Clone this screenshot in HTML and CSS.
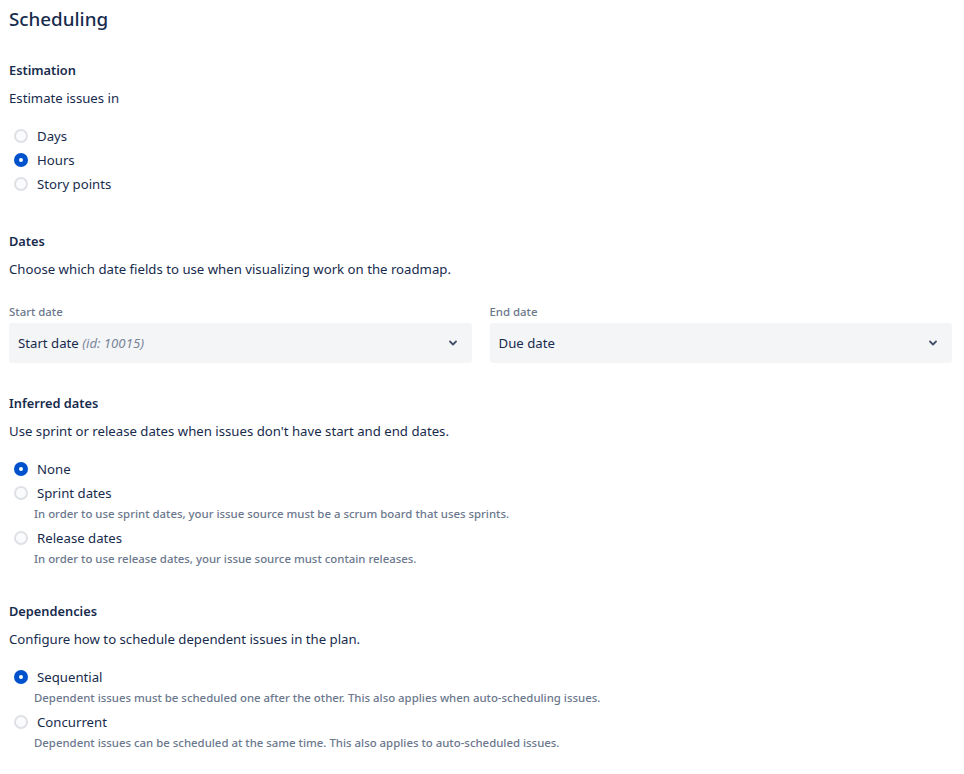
FILE: index.html
```html
<!DOCTYPE html>
<html lang="en">
<head>
  <meta charset="UTF-8">
  <title>Scheduling</title>
  <link rel="stylesheet" href="styles.css">
</head>
<body>
  <h1 class="page-title">Scheduling</h1>

  <section class="group first">
    <h2>Estimation</h2>
    <p class="desc">Estimate issues in</p>
    <div class="radios">
      <label class="radio"><span class="dot"></span>Days</label>
      <label class="radio"><span class="dot checked"></span>Hours</label>
      <label class="radio"><span class="dot"></span>Story points</label>
    </div>
  </section>

  <section class="group dates">
    <h2>Dates</h2>
    <p class="desc">Choose which date fields to use when visualizing work on the roadmap.</p>
    <div class="fields">
      <div class="field">
        <div class="field-label">Start date</div>
        <div class="select">
          <span>Start date <em>(id: 10015)</em></span>
          <svg width="8" height="6" viewBox="0 0 8 6"><path d="M1 1.5l3 3 3-3" fill="none" stroke="#42526E" stroke-width="1.8" stroke-linecap="round" stroke-linejoin="round"/></svg>
        </div>
      </div>
      <div class="field">
        <div class="field-label">End date</div>
        <div class="select">
          <span>Due date</span>
          <svg width="8" height="6" viewBox="0 0 8 6"><path d="M1 1.5l3 3 3-3" fill="none" stroke="#42526E" stroke-width="1.8" stroke-linecap="round" stroke-linejoin="round"/></svg>
        </div>
      </div>
    </div>
  </section>

  <section class="group inferred">
    <h2>Inferred dates</h2>
    <p class="desc">Use sprint or release dates when issues don't have start and end dates.</p>
    <div class="radios">
      <label class="radio"><span class="dot checked"></span>None</label>
      <div class="option">
        <label class="radio"><span class="dot"></span>Sprint dates</label>
        <div class="helper">In order to use sprint dates, your issue source must be a scrum board that uses sprints.</div>
      </div>
      <div class="option">
        <label class="radio"><span class="dot"></span>Release dates</label>
        <div class="helper">In order to use release dates, your issue source must contain releases.</div>
      </div>
    </div>
  </section>

  <section class="group deps">
    <h2>Dependencies</h2>
    <p class="desc">Configure how to schedule dependent issues in the plan.</p>
    <div class="radios">
      <div class="option">
        <label class="radio"><span class="dot checked"></span>Sequential</label>
        <div class="helper">Dependent issues must be scheduled one after the other. This also applies when auto-scheduling issues.</div>
      </div>
      <div class="option">
        <label class="radio"><span class="dot"></span>Concurrent</label>
        <div class="helper">Dependent issues can be scheduled at the same time. This also applies to auto-scheduled issues.</div>
      </div>
    </div>
  </section>
</body>
</html>
```

FILE: styles.css
```css
html, body {
  margin:0;
  padding:0;
  background:#fff;
}
body {
  padding:0 12px 0 9px;
  font-family:"Noto Sans", "Open Sans", sans-serif;
  font-size:13.2px;
  color:#172B4D;
}
.page-title {
  margin:7px 0 0;
  font-size:18.8px;
  line-height:24px;
  font-weight:500;
}
.group {
  margin-top:30px;
}
.group.first {
  margin-top:29px;
}
.group.dates {
  margin-top:35px;
}
.group.inferred {
  margin-top:30px;
}
.group.deps {
  margin-top:33px;
}
h2 {
  margin:0;
  font-size:12.8px;
  line-height:20px;
  font-weight:600;
}
.desc {
  margin:8px 0 0;
  line-height:20px;
}
.radios {
  margin-top:16px;
}
.radio {
  display:flex;
  align-items:center;
  height:24px;
  line-height:24px;
}
.dot {
  box-sizing:border-box;
  width:14px;
  height:14px;
  margin:0 9px 0 5px;
  border-radius:50%;
  border:2px solid #DFE1E6;
  background:#FAFBFC;
  position:relative;
}
.dot.checked {
  border-color:#0052CC;
  background:#0052CC;
}
.dot.checked::after {
  content:"";
  position:absolute;
  left:3px;
  top:3px;
  width:4px;
  height:4px;
  border-radius:50%;
  background:#fff;
}
.option {
  margin-bottom:3px;
}
.helper {
  margin-left:25px;
  font-size:11.4px;
  line-height:18px;
  color:#6B778C;
  font-weight:500;
}
.fields {
  margin-top:25px;
  display:flex;
  gap:18px;
}
.field {
  flex:1;
}
.field-label {
  font-size:11.4px;
  line-height:16px;
  color:#6B778C;
  font-weight:500;
}
.select {
  margin-top:3px;
  height:40px;
  box-sizing:border-box;
  padding:0 15px 0 9px;
  background:#F4F5F7;
  border-radius:3px;
  display:flex;
  align-items:center;
  justify-content:space-between;
}
.select em {
  color:#7A869A;
}
```
